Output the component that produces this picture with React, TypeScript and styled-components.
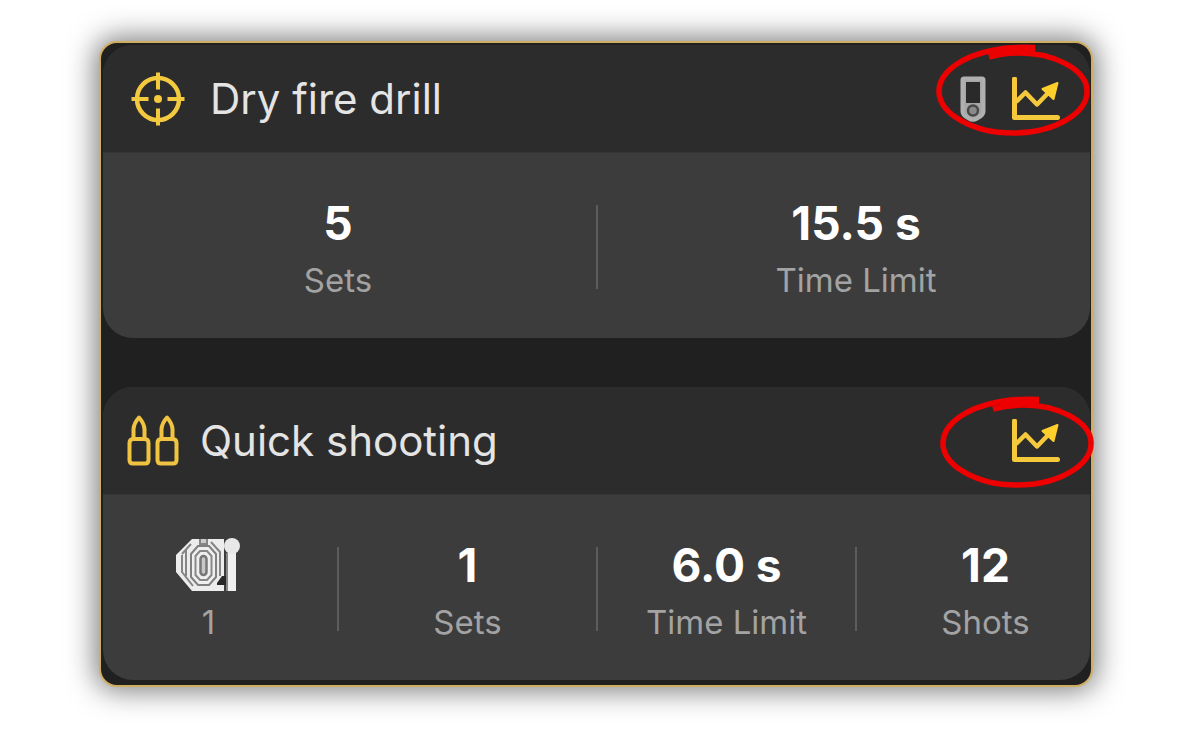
import React from "react";
import styled, { createGlobalStyle } from "styled-components";

const GlobalStyle = createGlobalStyle`
  *, *::before, *::after { box-sizing: border-box; }
  body {
    margin: 0;
    background: #ffffff;
    font-family: Inter, "Liberation Sans", sans-serif;
  }
  h2, p, dl, dt, dd { margin: 0; }
`;

const Page = styled.main`
  padding: 41px 107px 54px 99px;
`;

const Frame = styled.div`
  display: flex;
  flex-direction: column;
  gap: 49px;
  padding: 2px 1px 5px 2px;
  background: #202020;
  border: 2px solid #cfae62;
  border-radius: 18px;
  box-shadow: 0 0 28px 4px rgba(0, 0, 0, 0.5);
`;

const Card = styled.section`
  border-radius: 30px;
  background: #3c3c3c;
`;

const Header = styled.header<{ $gap: number; $inset: number }>`
  display: flex;
  align-items: center;
  gap: ${(p) => p.$gap}px;
  height: 108px;
  padding: 0 30px 0 ${(p) => p.$inset}px;
  background: #2c2c2c;
  border-radius: 30px 30px 0 0;
  border-bottom: 1px solid #353535;
`;

const Title = styled.h2`
  flex: 1;
  color: #e4e4e4;
  font-size: 42px;
  font-weight: 400;
  line-height: 48px;
`;

const Actions = styled.div`
  position: relative;
  display: flex;
  align-items: center;
  gap: 24px;
`;

const Marker = styled.svg<{ $right: number; $top: number }>`
  position: absolute;
  right: ${(p) => p.$right}px;
  top: ${(p) => p.$top}px;
  pointer-events: none;
`;

const Clip = styled.div`
  overflow: hidden;
  border-radius: 0 0 30px 30px;
`;

const Stats = styled.dl`
  display: flex;
  height: 185px;
  margin: 0 -25px 0 -24px;
  padding: 44px 0;
`;

const Stat = styled.div`
  display: flex;
  flex: 1 1 0;
  flex-direction: column;
  align-items: center;
  position: relative;
  height: 96px;

  & + &::before {
    content: "";
    position: absolute;
    left: -1px;
    top: 8px;
    width: 2px;
    height: 84px;
    background: #5c5c5c;
  }
`;

const Value = styled.dd`
  order: 0;
  display: flex;
  align-items: center;
  height: 52px;
  color: #ffffff;
  font-size: 46px;
  font-weight: 700;
  line-height: 52px;
  white-space: nowrap;
`;

const Label = styled.dt`
  order: 1;
  margin-top: 11px;
  color: #a3a3a3;
  font-size: 33px;
  font-weight: 400;
  line-height: 40px;
  white-space: nowrap;
`;

const Crosshair = () => (
  <svg width="54" height="54" viewBox="0 0 54 54" fill="none" stroke="#f3c93f" strokeWidth="4.500" aria-hidden="true">
    <circle cx="27" cy="27" r="21" />
    <path d="M27 0.500v17M27 36.500v17M0.500 27h17M36.500 27h17" strokeWidth="4" />
    <circle cx="27" cy="27" r="4" fill="#f3c93f" stroke="none" />
  </svg>
);

const Bullets = () => (
  <svg width="52" height="52" viewBox="0 0 52 52" fill="none" stroke="#f0c440" strokeWidth="4" strokeLinejoin="round" aria-hidden="true">
    {[0, 28].map((x) => (
      <g key={x} transform={`translate(${x} 0)`}>
        <path d="M6.500 23V14Q7 8 12 2.500Q17 8 17.500 14V23" />
        <path d="M6.500 24H17.500Q21.500 24 21.500 28V45Q21.500 48.500 18 48.500H6Q2.500 48.500 2.500 45V28Q2.500 24 6.500 24Z" />
      </g>
    ))}
  </svg>
);

const Timer = () => (
  <svg width="26" height="46" viewBox="0 0 26 46" fill="none" stroke="#b0b0b0" aria-hidden="true">
    <path d="M4 2.500H22Q23.500 2.500 23.500 4V35Q23.500 38 21 40L17 42.500Q13 45 9 42.500L5 40Q2.500 38 2.500 35V4Q2.500 2.500 4 2.500Z" fill="#a6a6a6" strokeWidth="4" />
    <path d="M6 6H20V27H6Z" fill="#2a2a2a" stroke="none" />
    <circle cx="13" cy="34.500" r="5" fill="#8a8a8a" stroke="#484848" strokeWidth="2.500" />
  </svg>
);

const Trend = () => (
  <svg width="50" height="44" viewBox="0 0 50 44" fill="none" stroke="#f6c93c" aria-hidden="true">
    <path d="M4.500 2V40.500H47.500" strokeWidth="5" strokeLinejoin="round" strokeLinecap="round" />
    <path d="M6 25L15.500 15.500L27 27.500L40 14" strokeWidth="4.500" strokeLinejoin="round" />
    <path d="M47.500 6L32.500 12L43.500 22Z" fill="#ffcf2c" stroke="#ffcf2c" strokeWidth="2" strokeLinejoin="round" />
  </svg>
);

const Targets = () => (
  <svg width="66" height="54" viewBox="0 0 66 54" aria-hidden="true">
    <path d="M16 1H48V53H16L0 34V17Z" fill="#ececec" />
    <path d="M10 12V38M6 17V34L17 48M15 6L6 16" fill="none" stroke="#858585" strokeWidth="2" />
    <path d="M41 45L46 38H52V47H41Z" fill="#282828" />
    <path d="M22 8L15 16V39L22 47H33L40 39V16L33 8Z" fill="#efefef" stroke="#808080" strokeWidth="2" />
    <path d="M24 13L19.500 18V37L24 42H31L35.500 37V18L31 13Z" fill="none" stroke="#888888" strokeWidth="2" />
    <rect x="24.500" y="18" width="6" height="19" rx="3" fill="#c8c8c8" stroke="#777777" strokeWidth="2.500" />
    <path d="M24 1V6H31V1" fill="#cccccc" stroke="#858585" strokeWidth="2" />
    <path d="M35 4L44 14V38" fill="none" stroke="#858585" strokeWidth="2" />
    <path d="M52 12V53H60V12Z" fill="#f0f0f0" />
    <path d="M51 15V53" stroke="#858585" strokeWidth="2" />
    <circle cx="56" cy="8" r="8" fill="#e8e8e8" />
  </svg>
);

const Circled = ({ right, top }: { right: number; top: number }) => (
  <Marker $right={right} $top={top} width="154" height="92" viewBox="0 0 154 92" fill="none" stroke="#ec0000" strokeWidth="5.500" aria-hidden="true">
    <path d="M99 3.500C85 3 71 3 58 6C27 12 4 27 3 46C2 69 36 89 77 89C119 89 152 69 151 46C150 25 117 9 84 9C74 9 64 10 53 13" />
    <path d="M60 8Q78 5 99 5" strokeWidth="5" />
  </Marker>
);

const StatItem = ({ value, label }: { value: React.ReactNode; label: string }) => (
  <Stat>
    <Label>{label}</Label>
    <Value>{value}</Value>
  </Stat>
);

export default function App() {
  return (
    <>
      <GlobalStyle />
      <Page>
        <Frame>
          <Card>
            <Header $gap={25} $inset={28}>
              <Crosshair />
              <Title>Dry fire drill</Title>
              <Actions>
                <Timer />
                <Trend />
                <Circled right={-30} top={-32} />
              </Actions>
            </Header>
            <Clip>
              <Stats>
                <StatItem value="5" label="Sets" />
                <StatItem value="15.5 s" label="Time Limit" />
              </Stats>
            </Clip>
          </Card>
          <Card>
            <Header $gap={21} $inset={24}>
              <Bullets />
              <Title>Quick shooting</Title>
              <Actions>
                <Trend />
                <Circled right={-34} top={-23} />
              </Actions>
            </Header>
            <Clip>
              <Stats>
                <StatItem value={<Targets />} label="1" />
                <StatItem value="1" label="Sets" />
                <StatItem value="6.0 s" label="Time Limit" />
                <StatItem value="12" label="Shots" />
              </Stats>
            </Clip>
          </Card>
        </Frame>
      </Page>
    </>
  );
}
